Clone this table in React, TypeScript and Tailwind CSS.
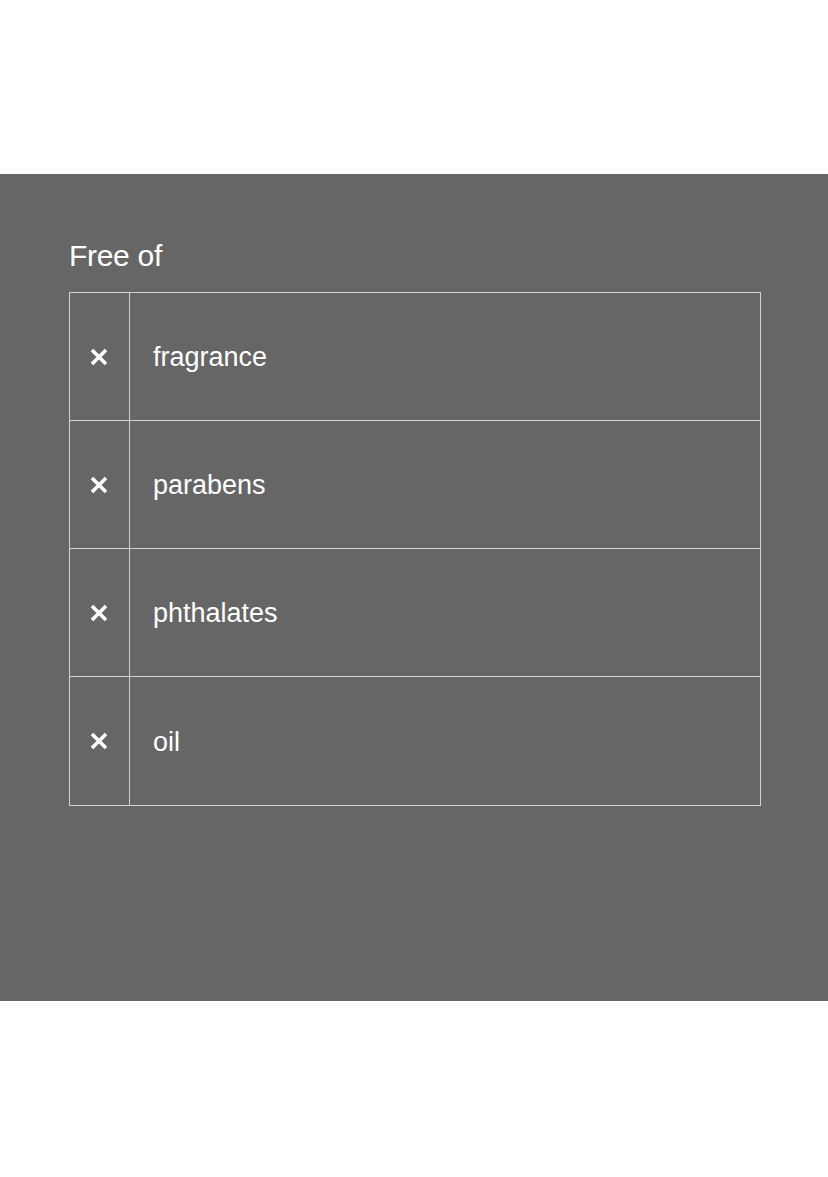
const items = ['fragrance', 'parabens', 'phthalates', 'oil']

function Cross() {
  return (
    <svg width="18" height="18" viewBox="0 0 18 18" className="block">
      <path d="M2 2 L16 16 M16 2 L2 16" stroke="#fff" strokeWidth="3.6" strokeLinecap="butt" />
    </svg>
  )
}

export default function App() {
  return (
    <div className="w-[828px] h-[1177px] bg-white font-['Liberation_Sans',Arial,sans-serif]">
      <div className="h-[174px]" />
      <section className="h-[827px] bg-[#666666] px-[69px] pt-[65px] text-white">
        <h2 className="text-[30px] leading-[34px] tracking-[-0.01em] mb-[19px]">Free of</h2>
        <div className="w-[692px] border border-[#d2d2d2] divide-y divide-[#d2d2d2]">
          {items.map((item) => (
            <div key={item} className="flex h-[128px]">
              <div className="w-[60px] shrink-0 border-r border-[#d2d2d2] flex items-center justify-center pr-[1px]">
                <Cross />
              </div>
              <div className="flex items-center pl-[23px] text-[27px] pt-[2px]">{item}</div>
            </div>
          ))}
        </div>
      </section>
    </div>
  )
}
